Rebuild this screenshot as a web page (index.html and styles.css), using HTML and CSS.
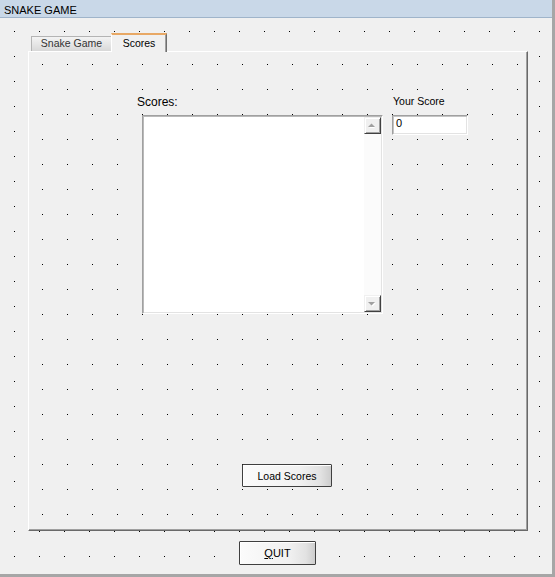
FILE: index.html
```html
<!DOCTYPE html>
<html>
<head>
<meta charset="utf-8">
<title>SNAKE GAME</title>
<link rel="stylesheet" href="styles.css">
</head>
<body>
<div class="window">
  <div class="titlebar">SNAKE GAME</div>
  <div class="client">
    <div class="tabcontrol">
      <div class="tabstrip">
        <div class="tab">Snake Game</div>
        <div class="tab selected">Scores</div>
      </div>
      <div class="tabpage">
        <div class="row">
          <div class="col-scores">
            <div class="label-scores">Scores:</div>
            <div class="listbox">
              <div class="list-items"></div>
              <div class="vscroll">
                <div class="sbtn">
                  <svg width="9" height="6" viewBox="0 0 9 6"><polygon points="1,5 4,2 7,5" fill="#fff"/><polygon points="0,4 3.5,0.5 7,4" fill="#a0a0a0"/></svg>
                </div>
                <div class="track"></div>
                <div class="sbtn">
                  <svg width="9" height="6" viewBox="0 0 9 6"><polygon points="1,2 8,2 4.5,5.5" fill="#fff"/><polygon points="0,1 7,1 3.5,4.5" fill="#a0a0a0"/></svg>
                </div>
              </div>
            </div>
          </div>
          <div class="col-your">
            <div class="label-your">Your Score</div>
            <div class="textbox">0</div>
          </div>
        </div>
        <button class="btn btn-load">Load Scores</button>
      </div>
    </div>
    <button class="btn btn-quit"><u>Q</u>UIT</button>
  </div>
</div>
</body>
</html>
```
FILE: styles.css
```css
html, body {
  margin: 0;
  padding: 0;
}
body {
  width: 555px;
  height: 577px;
  background: #f0f0f0;
  font-family: "Liberation Sans", Arial, sans-serif;
  color: #000;
  overflow: hidden;
}
.window {
  box-sizing: border-box;
  width: 555px;
  height: 577px;
  display: flex;
  flex-direction: column;
  border-right: 3px solid #a6a6a6;
  border-bottom: 3px solid #a6a6a6;
}
.titlebar {
  height: 14px;
  padding: 3px 0 0 4px;
  line-height: 14px;
  font-size: 11px;
  background: #c9d8e8;
  border-bottom: 1px solid #9fb4ca;
}
.client {
  flex: 1;
  display: flex;
  flex-direction: column;
  padding-top: 15px;
  background-color: #f0f0f0;
  background-image: conic-gradient(at 1px 1px, transparent 75%, #000 0);
  background-size: 25px 25px;
  background-position: 14px 13px;
}
.tabcontrol {
  margin-left: 28px;
  width: 500px;
  display: flex;
  flex-direction: column;
}
.tabstrip {
  position: relative;
  z-index: 1;
  height: 18px;
  display: flex;
  align-items: flex-start;
  padding-left: 3px;
}
.tab {
  box-sizing: border-box;
  width: 80px;
  height: 15px;
  margin-top: 3px;
  border-top: 1px solid #b4b4b4;
  border-left: 1px solid #b4b4b4;
  background: linear-gradient(#f3f3f3, #e6e6e6 50%, #d8d8d8);
  font-size: 10.5px;
  line-height: 12px;
  text-align: center;
  color: #333;
}
.tab.selected {
  width: 56px;
  height: 19px;
  margin-top: 0;
  border-top: 2px solid #e8a865;
  border-left: 1px solid #ffffff;
  border-right: 1px solid #6f6f6f;
  box-shadow: inset -1px 0 0 #a0a0a0;
  background: #f0f0f0;
  padding-top: 1px;
  line-height: 14px;
  color: #000;
}
.tabpage {
  box-sizing: border-box;
  height: 480px;
  display: flex;
  flex-direction: column;
  align-items: flex-start;
  border-top: 1px solid #ffffff;
  border-left: 1px solid #ffffff;
  border-right: 1px solid #696969;
  border-bottom: 1px solid #696969;
  box-shadow: inset -1px -1px 0 #a0a0a0;
  background-color: #f0f0f0;
  background-image: conic-gradient(at 1px 1px, transparent 75%, #000 0);
  background-size: 25px 25px;
  background-position: 13px 12px;
}
.row {
  display: flex;
  align-items: flex-start;
  margin-top: 42px;
  padding-left: 108px;
}
.col-scores {
  display: flex;
  flex-direction: column;
  align-items: flex-start;
}
.label-scores {
  margin-top: 1px;
  font-size: 12px;
  line-height: 14px;
}
.listbox {
  box-sizing: border-box;
  margin-top: 6px;
  margin-left: 5px;
  width: 241px;
  height: 199px;
  display: flex;
  border-top: 1px solid #a0a0a0;
  border-left: 1px solid #a0a0a0;
  border-right: 1px solid #ffffff;
  border-bottom: 1px solid #ffffff;
  box-shadow: inset 1px 1px 0 #b9b9b9, inset -1px -1px 0 #e3e3e3;
  padding: 1px;
  background: #fff;
}
.list-items {
  flex: 1;
  background: #fff;
}
.vscroll {
  width: 17px;
  display: flex;
  flex-direction: column;
  background: #fbfbfb;
}
.sbtn {
  box-sizing: border-box;
  width: 17px;
  height: 17px;
  display: flex;
  align-items: center;
  justify-content: center;
  background: #f0f0f0;
  border-top: 1px solid #f0f0f0;
  border-left: 1px solid #f0f0f0;
  border-right: 1px solid #404040;
  border-bottom: 1px solid #404040;
  box-shadow: inset 1px 1px 0 #ffffff, inset -1px -1px 0 #a0a0a0;
}
.track {
  flex: 1;
}
.col-your {
  display: flex;
  flex-direction: column;
  align-items: flex-start;
  margin-left: 9px;
}
.label-your {
  margin-left: 1px;
  font-size: 10.5px;
  line-height: 14px;
}
.textbox {
  box-sizing: border-box;
  margin-top: 7px;
  width: 76px;
  height: 20px;
  padding-left: 3px;
  font-size: 11px;
  line-height: 15px;
  background: #fff;
  border-top: 1px solid #a0a0a0;
  border-left: 1px solid #a0a0a0;
  border-right: 1px solid #ffffff;
  border-bottom: 1px solid #ffffff;
  box-shadow: inset 1px 1px 0 #c4c4c4, inset -1px -1px 0 #e3e3e3;
}
.btn {
  box-sizing: border-box;
  padding: 0;
  font-family: "Liberation Sans", Arial, sans-serif;
  color: #000;
  border: 1px solid #3f3f3f;
  border-radius: 1px;
  background: linear-gradient(to right, #fbfbfb 0%, #f1f1f1 65%, #e2e2e2 88%, #cdcdcd 100%);
  box-shadow: inset 1px 1px 0 #ffffff;
  text-align: center;
}
.btn-load {
  margin-top: 150px;
  margin-left: 213px;
  width: 90px;
  height: 23px;
  font-size: 10.5px;
}
.btn-quit {
  margin-top: 10px;
  margin-left: 239px;
  width: 77px;
  height: 24px;
  font-size: 11px;
  align-self: flex-start;
}
.btn-quit u {
  text-decoration-thickness: 1px;
}
```
